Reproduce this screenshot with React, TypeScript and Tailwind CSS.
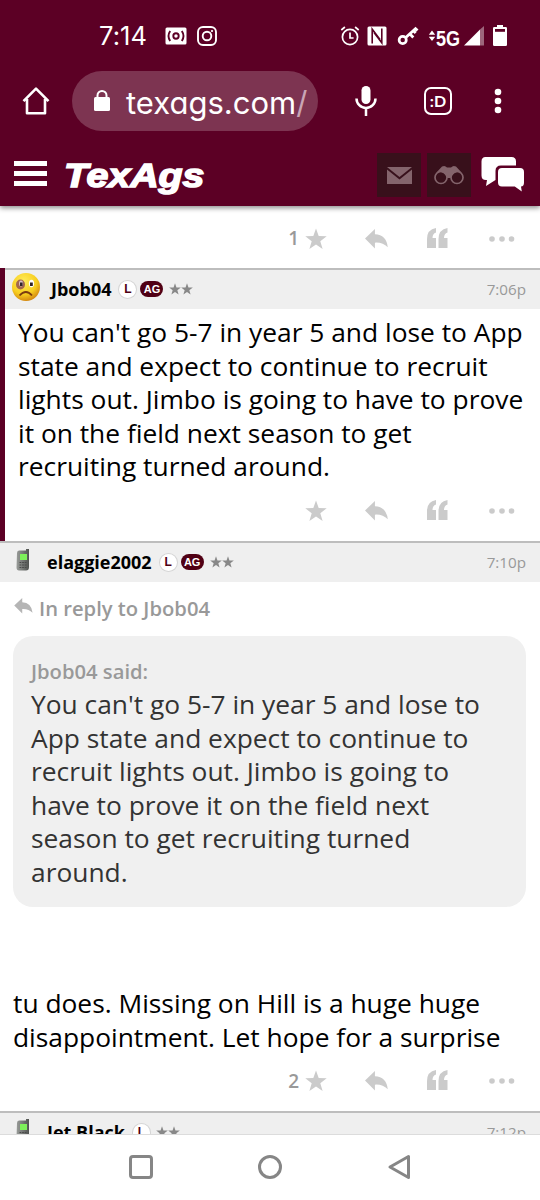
import type { ReactNode } from 'react'

const NOTO = 'font-["Open_Sans","Noto_Sans",sans-serif]'

function StatusBar() {
  return (
    <div className="flex h-[72px] items-center pl-[99px]">
      <span className='w-[66px] font-["Inter",sans-serif] text-[25.5px] tracking-[0.1px] leading-none'>7:14</span>
      <svg width="22" height="20" viewBox="0 0 22 20" className="shrink-0">
        <rect x="0.5" y="1.5" width="21" height="17" rx="1.5" fill="#fff" />
        <g fill="none" stroke="#5c0025" strokeWidth="1.9">
          <circle cx="11" cy="10" r="2.7" />
          <path d="M5.2 5q-3.4 5 0 10M16.8 5q3.4 5 0 10" />
        </g>
      </svg>
      <svg width="20" height="20" viewBox="0 0 20 20" className="ml-[10px] shrink-0" fill="none" stroke="#fff" strokeWidth="1.9">
        <rect x="1" y="1" width="18" height="18" rx="5" />
        <circle cx="10" cy="10" r="4.3" />
        <circle cx="15" cy="5" r="0.7" fill="#fff" strokeWidth="1" />
      </svg>

      <svg width="20" height="22" viewBox="0 0 20 22" className="ml-[123px] shrink-0" fill="none" stroke="#fff" strokeWidth="1.7">
        <circle cx="10" cy="12" r="7.6" />
        <path d="M10 7.5V13h3.6M1.3 5l3.6-3M18.7 5l-3.6-3" />
      </svg>
      <svg width="20" height="20" viewBox="0 0 20 20" className="ml-[7px] shrink-0">
        <rect x="0.5" y="0.5" width="19" height="19" rx="1.5" fill="#fff" />
        <path d="M5.200 17.500V3.200L13 13.500M14.800 2.500v14.300L7 6.500" fill="none" stroke="#5c0025" strokeWidth="1.6" />
        <path d="M5.200 3.200l9.600 13.600" stroke="#5c0025" strokeWidth="0.8" />
      </svg>
      <svg width="22" height="20" viewBox="0 0 22 20" className="ml-[10px] shrink-0" fill="none" stroke="#fff">
        <circle cx="5.700" cy="14" r="3.600" strokeWidth="2.700" />
        <path d="M8.500 11.800L18.500 2.600l2 2M13 8l3.300 3.500M16.500 4.800l2.200 2.200" strokeWidth="2.800" />
      </svg>
      <svg width="8" height="12" viewBox="0 0 8 12" className="ml-[9px] shrink-0" fill="#fff">
        <path d="M4 0.5L7.200 4.700H0.800zM4 11L0.800 6.800h6.400z" />
      </svg>
      <span className='mt-[6px] w-[28px] origin-left scale-x-[0.82] font-["Liberation_Sans",sans-serif] text-[22px] font-bold leading-none'>5G</span>
      <svg width="20" height="20" viewBox="0 0 20 20" className="shrink-0" fill="#fff">
        <path d="M0 19.500L16 3.500v16z" />
        <path d="M16 3.500L20 0v19.500h-4z" opacity="0.4" />
      </svg>
      <svg width="14" height="22" viewBox="0 0 14 22" className="ml-[9px] shrink-0">
        <path d="M4 0h6v2.200H4zM1.300 2h11.400q1.300 0 1.300 1.300v16.400q0 1.300-1.300 1.300H1.300Q0 21 0 19.700V3.300Q0 2 1.300 2z" fill="#fff" />
        <path d="M2 4h10v2.800H2z" fill="#5c0025" />
      </svg>
    </div>
  )
}

function AddressBar() {
  return (
    <div className="-mt-px flex h-[60px] items-center pl-[21px]">
      <svg width="30" height="30" viewBox="0 0 30 30" className="shrink-0" fill="none" stroke="#fff" strokeWidth="2.6" strokeLinejoin="round">
        <path d="M2.500 15.200L15 2.700l12.500 12.500M6 13v14.200h18V13" />
      </svg>
      <div className="ml-[21px] flex h-[60px] w-[246px] items-center rounded-full bg-[#7d3451] pl-[21px]">
        <svg width="18" height="24" viewBox="0 0 18 24" className="mb-[1px] shrink-0">
          <rect x="1" y="8" width="16" height="14" rx="1.500" fill="#fff" />
          <path d="M4.500 10V6.500a4.500 4.500 0 0 1 9 0V10" fill="none" stroke="#fff" strokeWidth="2" />
        </svg>
        <span className='ml-[15px] mt-[2px] whitespace-nowrap font-["Inter",sans-serif] text-[31px] leading-none [font-feature-settings:"cv11","ss03"]'>
          texags.com<span className="text-[#c9a5b5]">/</span>
        </span>
      </div>
      <svg width="24" height="32" viewBox="0 0 24 32" className="ml-[36px] shrink-0">
        <rect x="7.500" y="1" width="9" height="18" rx="4.500" fill="#fff" />
        <path d="M2.500 13.500a9.500 9.500 0 0 0 19 0M12 23v8" fill="none" stroke="#fff" strokeWidth="2.500" />
      </svg>
      <div className='ml-[46px] flex h-[28px] w-[28px] shrink-0 items-center justify-center rounded-[7px] border-[2.5px] border-white font-["Lato",sans-serif] text-[16px] font-bold leading-none'>
        :D
      </div>
      <svg width="8" height="26" viewBox="0 0 8 26" className="ml-[42px] shrink-0" fill="#fff">
        <circle cx="4" cy="4" r="3.300" />
        <circle cx="4" cy="13" r="3.300" />
        <circle cx="4" cy="22" r="3.300" />
      </svg>
    </div>
  )
}

function SiteHeader() {
  return (
    <div className="flex h-[74px] items-start pl-[14px] pt-[22px]">
      <div className="mt-[8px] flex w-[33px] flex-col gap-[5px]">
        <i className="h-[5px] bg-white" />
        <i className="h-[5px] bg-white" />
        <i className="h-[5px] bg-white" />
      </div>
      <span className='ml-[17px] mt-[5px] w-[313px] origin-left scale-x-[1.19] font-["Liberation_Sans",sans-serif] text-[33px] font-bold italic leading-[36px] [-webkit-text-stroke:1.5px_white]'>
        TexAgs
      </span>
      <div className="flex h-[44px] w-[44px] shrink-0 items-center justify-center bg-[#38101b]">
        <svg width="25" height="18" viewBox="0 0 25 18" fill="#84646c">
          <path d="M0 1h25L12.500 11zM0 3.500l12.500 10 12.500-10V18H0z" />
        </svg>
      </div>
      <div className="ml-[6px] flex h-[44px] w-[44px] shrink-0 items-center justify-center bg-[#38101b]">
        <svg width="30" height="22" viewBox="0 0 30 22" fill="none" stroke="#84646c">
          <circle cx="7" cy="13.500" r="6" strokeWidth="1.700" />
          <circle cx="23" cy="13.500" r="6" strokeWidth="1.700" />
          <path d="M2 9l6-6.500q3-1.500 5 1h4q2-2.500 5-1L28 9q-6-4-11.500 5h-3Q8 5 2 9z" fill="#84646c" stroke="none" />
        </svg>
      </div>
      <svg width="44" height="36" viewBox="0 0 44 36" className="ml-[9px] mt-[4px] shrink-0" fill="#fff">
        <path d="M5.500 0h26q4.500 0 4.500 4.500V8.500H21q-5.500 0-5.500 5.500v9L6 29l1-6H6q-4.500 0-4.500-4.500v-14Q1.500 0 5.500 0z" />
        <path d="M22 11h18q4 0 4 4v10.500q0 4-3 4l.8 5-7-5H22q-4 0-4-4V15q0-4 4-4z" />
      </svg>
    </div>
  )
}

function ReplyIcon({ width, height, fill }: { width: number; height: number; fill: string }) {
  return (
    <svg width={width} height={height} viewBox="0 0 22 19" className="shrink-0" fill={fill}>
      <path d="M0 9L9.500 0v5Q20.500 5.500 21.800 17.500 17 12.500 9.500 13v5.500z" />
    </svg>
  )
}

function Star({ size, fill }: { size: number; fill: string }) {
  return (
    <svg width={size} height={size} viewBox="0 0 22 22" className="shrink-0" fill={fill}>
      <path d="M11 0.500l2.700 7.600 8 .2-6.400 4.900 2.300 7.800L11 16.400 4.400 21l2.300-7.800L.3 8.300l8-.2z" />
    </svg>
  )
}

function Actions({ count, className }: { count?: number; className: string }) {
  return (
    <div className={`flex items-center justify-end pr-[25px] ${className}`}>
      <span className={`mr-[6px] text-[19px] font-semibold text-[#999] ${NOTO}`}>{count}</span>
      <Star size={22} fill="#cbcbcb" />
      <span className="ml-[38px]">
        <ReplyIcon width={23} height={20} fill="#cbcbcb" />
      </span>
      <svg width="21" height="20" viewBox="0 0 21 20" className="ml-[39px] mb-[2px] shrink-0" fill="#cbcbcb">
        <path d="M0 20V11Q0 1.500 9 0v4.500Q5.500 5.500 5.500 10H9V20zM11.500 20V11q0-9.500 9-11v4.500Q17 5.500 17 10h3.500v10z" />
      </svg>
      <svg width="26" height="6" viewBox="0 0 26 6" className="ml-[41px] shrink-0" fill="#cbcbcb">
        <circle cx="3" cy="3" r="2.800" />
        <circle cx="13" cy="3" r="2.800" />
        <circle cx="22.500" cy="3" r="2.800" />
      </svg>
    </div>
  )
}

function SadFace() {
  return (
    <svg width="30" height="30" viewBox="0 0 30 30">
      <defs>
        <radialGradient id="face" cx="0.42" cy="0.3" r="0.7">
          <stop offset="0" stopColor="#ffec5c" />
          <stop offset="0.65" stopColor="#f8cf20" />
          <stop offset="1" stopColor="#d58a10" />
        </radialGradient>
      </defs>
      <circle cx="15" cy="15" r="14" fill="url(#face)" />
      <ellipse cx="9.500" cy="12.500" rx="4.500" ry="5" fill="#8d4a50" opacity="0.8" />
      <ellipse cx="10" cy="11.500" rx="2" ry="3" fill="#d8c0c8" />
      <ellipse cx="20.500" cy="11.500" rx="2.600" ry="3.700" fill="#fff" />
      <rect x="9" y="10.500" width="2.600" height="3.500" fill="#30242a" />
      <rect x="19" y="10.500" width="2.800" height="3.500" fill="#30242a" />
      <path d="M8.500 23.500Q15 16.500 21 23.500" fill="none" stroke="#7a3a10" strokeWidth="1.800" />
    </svg>
  )
}

function PhoneIcon() {
  return (
    <svg width="14" height="22" viewBox="0 0 14 22">
      <defs>
        <linearGradient id="phone">
          <stop offset="0" stopColor="#9a9d9a" />
          <stop offset="1" stopColor="#505350" />
        </linearGradient>
      </defs>
      <path d="M3 1.500h7V0h3v18q0 3.500-3 3.500H3q-2.500 0-2.500-3L1 4q0-2.500 2-2.500z" fill="url(#phone)" />
      <rect x="4" y="5" width="7" height="6" fill="#7df05a" />
      <path d="M3.500 13.500h7M3.500 16h7M3.500 18.500h7" stroke="#4a4a4a" strokeWidth="1" strokeDasharray="1.800 0.800" />
    </svg>
  )
}

interface PostBarProps {
  avatar: ReactNode
  name: string
  time: string
  ag?: boolean
  className: string
}

function PostBar({ avatar, name, time, ag, className }: PostBarProps) {
  return (
    <div className={`flex h-[41px] shrink-0 items-center border-t-2 border-[#bdbdbd] bg-[#efefef] pb-px pr-[14px] ${className} ${NOTO}`}>
      {avatar}
      <span className="whitespace-nowrap text-[18px] font-bold text-black">{name}</span>
      <span className='ml-2 flex h-[17px] w-[17px] shrink-0 items-center justify-center rounded-full bg-white font-["Liberation_Sans",sans-serif] text-[12px] font-bold leading-none text-[#500014] ring-1 ring-[#d5d5d5]'>
        L
      </span>
      {ag && (
        <span className='ml-1 flex h-[16px] w-[23px] shrink-0 items-center justify-center rounded-full bg-[#500014] font-["Liberation_Sans",sans-serif] text-[11px] font-bold leading-none text-white'>
          AG
        </span>
      )}
      <span className="ml-[6px] flex">
        <Star size={12} fill="#888" />
        <Star size={12} fill="#888" />
      </span>
      <span className="ml-auto text-[15.2px] text-[#999]">{time}</span>
    </div>
  )
}

function Lines({ lines, className }: { lines: string[]; className: string }) {
  return (
    <p className={`whitespace-nowrap text-[26.35px] leading-[33.5px] ${className} ${NOTO}`}>
      {lines.map((line) => (
        <span key={line} className="block">{line}</span>
      ))}
    </p>
  )
}

const POST = [
  "You can't go 5-7 in year 5 and lose to App",
  'state and expect to continue to recruit',
  'lights out. Jimbo is going to have to prove',
  'it on the field next season to get',
  'recruiting turned around.',
]

const QUOTE = [
  "You can't go 5-7 in year 5 and lose to",
  'App state and expect to continue to',
  'recruit lights out. Jimbo is going to',
  'have to prove it on the field next',
  'season to get recruiting turned',
  'around.',
]

export default function App() {
  return (
    <div className="flex h-[1200px] w-[540px] flex-col overflow-hidden bg-white">
      <header className="relative z-10 h-[206px] shrink-0 bg-[#5c0025] text-white shadow-[0_2px_5px_rgba(0,0,0,0.45)]">
        <StatusBar />
        <AddressBar />
        <SiteHeader />
      </header>

      <main className="flex h-[928px] shrink-0 flex-col overflow-hidden">
        <Actions count={1} className="h-[62px] shrink-0 pt-[3px]" />

        <article className="h-[273px] shrink-0 border-l-[5px] border-[#5c0025]">
          <PostBar
            avatar={<span className="mb-1 w-[40px] shrink-0"><SadFace /></span>}
            name="Jbob04"
            time="7:06p"
            ag
            className="pl-[6px]"
          />
          <Lines lines={POST} className="ml-[13px] mt-[7px] text-black" />
          <Actions className="mt-[7px] h-[40px]" />
        </article>

        <article className="h-[570px] shrink-0">
          <PostBar
            avatar={<span className="mb-1 w-[31px] shrink-0"><PhoneIcon /></span>}
            name="elaggie2002"
            time="7:10p"
            ag
            className="pl-[16px]"
          />
          <div className={`flex h-[54px] items-center gap-[6px] pl-[14px] text-[20.2px] font-semibold text-[#999] ${NOTO}`}>
            <span className="mb-[6px]">
              <ReplyIcon width={19} height={16} fill="#b5b5b5" />
            </span>
            <span className="mb-[2px] whitespace-nowrap">In reply to Jbob04</span>
          </div>
          <blockquote className="ml-[13px] h-[271px] w-[513px] rounded-[20px] bg-[#f0f0f0] pl-[18px] pt-[21px]">
            <div className={`h-[31px] text-[20.2px] font-semibold leading-[28px] text-[#999] ${NOTO}`}>Jbob04 said:</div>
            <Lines lines={QUOTE} className="text-[#333]" />
          </blockquote>
          <Lines
            lines={['tu does. Missing on Hill is a huge huge', 'disappointment. Let hope for a surprise']}
            className="ml-[13px] mt-[80px] text-black"
          />
          <Actions count={2} className="mt-[7px] h-[40px]" />
        </article>

        <PostBar
          avatar={<span className="mb-1 w-[31px] shrink-0"><PhoneIcon /></span>}
          name="Jet Black"
          time="7:12p"
          className="pl-[16px]"
        />
      </main>

      <nav className="flex h-[66px] shrink-0 items-center border-t border-[#dcdcdc] bg-white pb-[2px] pl-[129px]">
        <div className="h-[24px] w-[24px] rounded-[4px] border-[3px] border-[#868686]" />
        <div className="ml-[105px] h-[24px] w-[24px] rounded-full border-[3px] border-[#868686]" />
        <svg width="24" height="26" viewBox="0 0 24 26" className="ml-[105px]" fill="none" stroke="#868686" strokeWidth="3" strokeLinejoin="round">
          <path d="M21.500 2.500v21L3 13z" />
        </svg>
      </nav>
    </div>
  )
}
